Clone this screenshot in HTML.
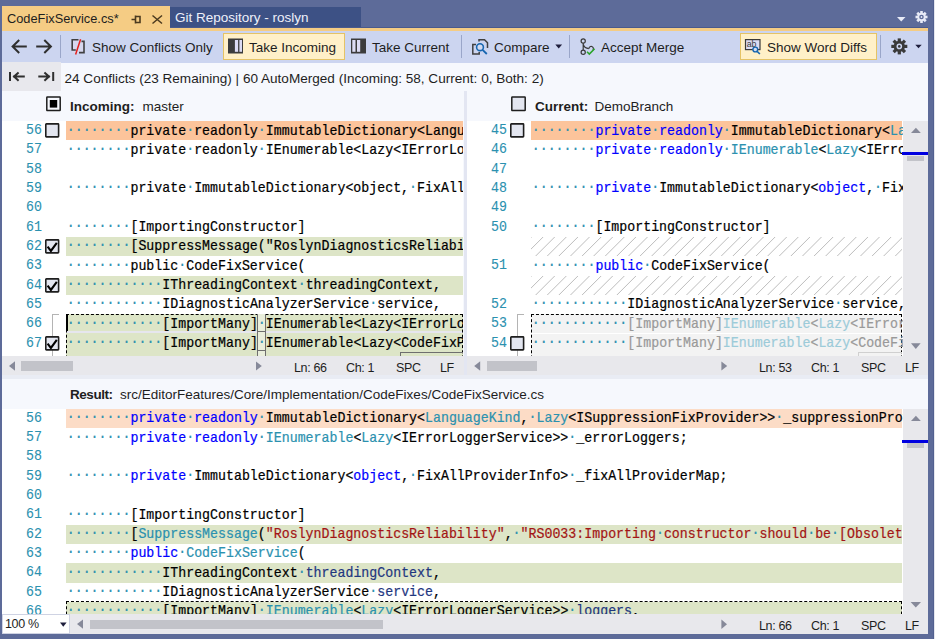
<!DOCTYPE html>
<html><head><meta charset="utf-8">
<style>
*{margin:0;padding:0;box-sizing:border-box}
html,body{width:935px;height:639px;overflow:hidden;background:#5d6b99;font-family:"Liberation Sans",sans-serif;color:#1e1e1e}
.a{position:absolute}
svg{position:absolute;overflow:visible}
.ui{font-size:13.5px;white-space:pre;position:absolute;line-height:16px;color:#1e1e1e}
.sep{position:absolute;width:1px;background:#9aa6c9;top:35px;height:23px}
.pane{position:absolute;overflow:hidden;background:#fff}
.in{position:absolute;left:0;top:0}
.bg{position:absolute;height:19.33px}
.bg.o{background:#fcc49b}
.bg.o2{background:#fcdcc6}
.bg.g{background:#dde5c7}
.bg.x{background:#f3f3f3}
.bg.h{background:repeating-linear-gradient(135deg,#fff 0,#fff 7.2px,#c4c4c4 7.2px,#c4c4c4 8.2px)}
.ln{position:absolute;width:40px;text-align:right;font-family:"Liberation Mono",monospace;font-size:13.27px;line-height:19.33px;color:#2b91af;white-space:pre;-webkit-text-stroke:0.1px currentColor;transform:scaleY(1.07);transform-origin:0 13.5px}
.code{position:absolute;font-family:"Liberation Mono",monospace;font-size:13.27px;line-height:19.33px;color:#000;white-space:pre;-webkit-text-stroke:0.2px currentColor;transform:scaleY(1.07);transform-origin:0 13.5px}
.code i{font-style:normal}
.code b{font-weight:normal;color:#2b91af;-webkit-text-stroke:0.2px currentColor;position:relative;top:-1.2px}
.code .k{color:#0000ff}.code .t{color:#2b91af}.code .s{color:#a31515}.code .p{color:#1f377f}.code .g{color:#999}.code .gt{color:#9ccbd9}
.cb{position:absolute;width:15px;height:15px;border:2px solid #1e1e1e;background:#e3e6f0;border-radius:1px}
.vs,.hs{position:absolute;background:#e8e8ec}
.thumb{position:absolute;background:#c2c3c9}
.st{position:absolute;font-size:12.5px;letter-spacing:-0.35px;white-space:pre;color:#1e1e1e;line-height:16px}
.dash{position:absolute;border:1px dashed #000}
</style></head><body>
<!-- main bg -->
<div class="a" style="left:2px;top:31px;width:926px;height:602px;background:#f6f8fd"></div>
<!-- tab bar -->
<div class="a" style="left:2px;top:6px;width:168px;height:25px;background:#f5cc84"></div>
<div class="ui" style="left:7px;top:11px;font-size:12.8px">CodeFixService.cs*</div>
<svg style="left:0;top:0" width="935" height="32">
 <path d="M131.5 19.5h4M135.5 15.5v8M135.5 16.5h4.5v6h-4.5" stroke="#4b3a1f" stroke-width="1.6" fill="none"/>
 <path d="M152.5 15.5l9.5 8M162 15.5l-9.5 8" stroke="#4b3a1f" stroke-width="1.5" fill="none"/>
 <path d="M897 17h8.5l-4.25 4.5z" fill="#e8ebf7"/>
 <g transform="translate(921.5 17)" fill="#e8ebf7"><circle r="4.2"/><g id="t"><rect x="-1.3" y="-6" width="2.6" height="12"/><rect x="-1.3" y="-6" width="2.6" height="12" transform="rotate(45)"/><rect x="-1.3" y="-6" width="2.6" height="12" transform="rotate(90)"/><rect x="-1.3" y="-6" width="2.6" height="12" transform="rotate(135)"/></g><circle r="2.3" fill="#5d6b99"/><circle r="0.9" fill="#e8ebf7"/></g>
</svg>
<div class="a" style="left:170px;top:7px;width:191px;height:21px;background:#3d5185"></div>
<div class="a" style="left:170px;top:27px;width:758px;height:1px;background:#4a5a8c"></div>
<div class="ui" style="left:175px;top:10px;color:#eef0fa;font-size:13.5px">Git Repository - roslyn</div>
<div class="a" style="left:2px;top:28px;width:926px;height:3px;background:#f5cc84"></div>
<!-- toolbar -->
<div class="a" style="left:2px;top:31px;width:926px;height:31.5px;background:#ccd5f0"></div>
<div class="a" style="left:223px;top:33px;width:122px;height:27px;background:#fff0c8;border:1px solid #e5c365"></div>
<div class="a" style="left:740px;top:33px;width:137px;height:27px;background:#fff0c8;border:1px solid #e5c365"></div>
<div class="sep" style="left:60px"></div>
<div class="sep" style="left:461px"></div>
<div class="sep" style="left:569px"></div>
<div class="sep" style="left:880px"></div>
<svg style="left:0;top:0" width="935" height="64">
 <!-- back/forward -->
 <path d="M26.8 46.5H12.5M19.2 40l-6.6 6.5 6.6 6.5" stroke="#2f2f2f" stroke-width="2" fill="none"/>
 <path d="M36.2 46.5H50.8M44.3 40l6.6 6.5-6.6 6.5" stroke="#2f2f2f" stroke-width="2" fill="none"/>
 <!-- show conflicts only -->
 <rect x="72" y="40" width="12" height="13" fill="#d6d7ee"/>
 <path d="M78.5 39.8H72.2V50H75.8M79 52.6H84V41.4H81.5" stroke="#404040" stroke-width="1.6" fill="none"/>
 <path d="M80.6 39.2L75.6 54.4" stroke="#e5201c" stroke-width="1.5"/>
 <!-- take incoming -->
 <rect x="228" y="38.5" width="15" height="15" fill="#3c3c3c"/>
 <rect x="234.9" y="40" width="3.2" height="11.8" fill="#dcdcf4"/>
 <rect x="239.4" y="40" width="2.6" height="11.8" fill="#dcdcf4"/>
 <!-- take current -->
 <rect x="351" y="38.5" width="15" height="15" fill="#3c3c3c"/>
 <rect x="352.3" y="40" width="3.2" height="11.8" fill="#dcdcf4"/>
 <rect x="357" y="40" width="3.2" height="11.8" fill="#dcdcf4"/>
 <!-- compare -->
 <path d="M479 41.5V39.8h5.5l3 3v5.2" stroke="#404040" stroke-width="1.5" fill="none"/>
 <path d="M476 44.5h-3.2v9.6h6.4v-2" stroke="#404040" stroke-width="1.5" fill="none"/>
 <circle cx="480" cy="47.2" r="3.4" stroke="#1766b0" stroke-width="1.6" fill="#d4dbf0"/>
 <path d="M482.6 49.8L486.8 54" stroke="#1766b0" stroke-width="1.8"/>
 <path d="M555.3 44.6h6.8l-3.4 3.8z" fill="#1e1e3c"/>
 <!-- accept merge -->
 <circle cx="583.2" cy="41" r="2.1" stroke="#3a3a3a" stroke-width="1.2" fill="none"/>
 <circle cx="583.2" cy="52.2" r="2.1" stroke="#3a3a3a" stroke-width="1.2" fill="none"/>
 <path d="M583.2 43.1v7M583.4 44.8c0.8 2.4 2.6 3.6 5.4 3.8" stroke="#3a3a3a" stroke-width="1.2" fill="none"/>
 <path d="M589 48.8a2.2 2.2 0 1 1 3.9 1.2" stroke="#3a3a3a" stroke-width="1.2" fill="none"/>
 <path d="M587 51.8l2.3 2.3 5.3-5.4" stroke="#2aa52a" stroke-width="1.6" fill="none"/>
 <!-- word diffs -->
 <rect x="745.5" y="39.6" width="14.5" height="10" stroke="#3a3a3a" stroke-width="1.2" fill="#dcdcf4"/>
 <text x="746.8" y="47.4" font-family="Liberation Sans" font-size="8.8" fill="#3a3a3a" letter-spacing="-0.3">ab</text>
 <circle cx="755.3" cy="49.5" r="2.4" stroke="#1766b0" stroke-width="1.4" fill="#d4dbf0"/>
 <path d="M757.1 51.3L759.9 54" stroke="#1766b0" stroke-width="1.6"/>
 <!-- gear -->
 <g transform="translate(899.3 46.4)" fill="#3a3a3a"><circle r="5.6"/><rect x="-1.6" y="-8" width="3.2" height="16"/><rect x="-1.6" y="-8" width="3.2" height="16" transform="rotate(45)"/><rect x="-1.6" y="-8" width="3.2" height="16" transform="rotate(90)"/><rect x="-1.6" y="-8" width="3.2" height="16" transform="rotate(135)"/><circle r="2.8" fill="#ccd5f0"/><circle r="1.3" fill="#3a3a3a"/></g>
 <path d="M915.3 44.8h6.4l-3.2 3.4z" fill="#1e1e3c"/>
</svg>
<div class="ui" style="left:92px;top:40px">Show Conflicts Only</div>
<div class="ui" style="left:249px;top:40px">Take Incoming</div>
<div class="ui" style="left:372px;top:40px">Take Current</div>
<div class="ui" style="left:494px;top:40px">Compare</div>
<div class="ui" style="left:601px;top:40px">Accept Merge</div>
<div class="ui" style="left:767px;top:40px">Show Word Diffs</div>
<!-- info row -->
<div class="a" style="left:2px;top:62px;width:59px;height:29px;background:#e8e8ed"></div>
<svg style="left:0;top:0" width="935" height="120">
 <path d="M10 72v9M24.8 76.6H13M18.6 72.4l-4.6 4.2 4.6 4.2" stroke="#2f2f2f" stroke-width="2" fill="none"/>
 <path d="M53.2 72v9M38.3 76.6H50M44.4 72.4l4.6 4.2-4.6 4.2" stroke="#2f2f2f" stroke-width="2" fill="none"/>
</svg>
<div class="ui" style="left:64.5px;top:70.5px;font-size:13.57px">24 Conflicts (23 Remaining) | 60 AutoMerged (Incoming: 58, Current: 0, Both: 2)</div>
<svg style="left:45.5px;top:96px" width="16" height="16"><rect x="0.8" y="0.9" width="13.4" height="13.6" rx="0.5" fill="#f6f8fd" stroke="#1e1e1e" stroke-width="1.5"/><rect x="3.8" y="4" width="7.4" height="7.6" fill="#000"/></svg>
<div class="ui" style="left:70px;top:99px"><b>Incoming:</b></div><div class="ui" style="left:142.5px;top:99px">master</div>
<svg style="left:510.5px;top:96px" width="16" height="16"><rect x="0.8" y="0.9" width="13.4" height="13.6" rx="0.5" fill="#e3e6f0" stroke="#1e1e1e" stroke-width="1.5"/></svg>
<div class="ui" style="left:535px;top:99px"><b>Current:</b></div><div class="ui" style="left:594.5px;top:99px">DemoBranch</div>
<div class="a" style="left:464px;top:91px;width:3px;height:284px;background:#e3e6f2"></div>
<!-- left pane -->
<div class="pane" style="left:2px;top:121px;width:461px;height:235px">
<div class="in" style="left:-2px;top:0">
<div class="bg o" style="top:0.00px;left:66px;width:397px"></div>
<div class="bg g" style="top:115.98px;left:66px;width:397px"></div>
<div class="bg g" style="top:154.64px;left:66px;width:397px"></div>
<div class="bg g" style="top:193.30px;left:66px;width:397px"></div>
<div class="bg g" style="top:212.63px;left:66px;width:397px"></div>
<div class="bg g" style="top:231.96px;left:66px;width:397px"></div>

<div class="a" style="left:66px;top:210.13px;width:397px;height:2px;background:#e6e6ee"></div>
<div class="a" style="left:51.5px;top:192.80px;width:1px;height:60px;background:#b4b4b4"></div>
<div class="a" style="left:51.5px;top:192.80px;width:7px;height:1px;background:#b4b4b4"></div>
<div class="dash" style="left:66px;top:192.70px;width:397px;height:60px;border-right:1px dashed #000"></div>
<div class="a" style="left:257px;top:193.30px;width:9px;height:60px;background:#e9eedb;border:1px solid #6e6e6e;border-top:0"></div>
<div class="a" style="left:257px;top:210.13px;width:9px;height:1px;background:#6e6e6e"></div>
<div class="a" style="left:257px;top:229.46px;width:9px;height:1px;background:#6e6e6e"></div>
<div class="a" style="left:400px;top:231.46px;width:63px;height:10px;border:1px solid #6e6e6e;border-right:0"></div>
<div class="a" style="left:65.5px;top:193.30px;width:2.3px;height:17px;background:#000"></div>

<div class="ln" style="top:0.00px;left:2px">56</div>
<div class="code" style="top:0.50px;left:66.70px"><b>·</b><b>·</b><b>·</b><b>·</b><b>·</b><b>·</b><b>·</b><b>·</b>private<b>·</b>readonly<b>·</b>ImmutableDictionary&lt;LanguageKind,<b>·</b>Lazy&lt;ISuppressionFixProvider&gt;&gt;</div>
<svg style="left:45.00px;top:2.00px" width="16" height="16"><rect x="0.8" y="0.9" width="12.8" height="13" rx="0.6" fill="#e3e6f0" stroke="#1e1e1e" stroke-width="1.6"/></svg>
<div class="ln" style="top:19.33px;left:2px">57</div>
<div class="code" style="top:19.83px;left:66.70px"><b>·</b><b>·</b><b>·</b><b>·</b><b>·</b><b>·</b><b>·</b><b>·</b>private<b>·</b>readonly<b>·</b>IEnumerable&lt;Lazy&lt;IErrorLoggerService&gt;&gt;<b>·</b>_errorLoggers;</div>
<div class="ln" style="top:38.66px;left:2px">58</div>
<div class="code" style="top:39.16px;left:66.70px"></div>
<div class="ln" style="top:57.99px;left:2px">59</div>
<div class="code" style="top:58.49px;left:66.70px"><b>·</b><b>·</b><b>·</b><b>·</b><b>·</b><b>·</b><b>·</b><b>·</b>private<b>·</b>ImmutableDictionary&lt;object,<b>·</b>FixAllProviderInfo&gt;<b>·</b>_fixAllProviderMap;</div>
<div class="ln" style="top:77.32px;left:2px">60</div>
<div class="code" style="top:77.82px;left:66.70px"></div>
<div class="ln" style="top:96.65px;left:2px">61</div>
<div class="code" style="top:97.15px;left:66.70px"><b>·</b><b>·</b><b>·</b><b>·</b><b>·</b><b>·</b><b>·</b><b>·</b>[ImportingConstructor]</div>
<div class="ln" style="top:115.98px;left:2px">62</div>
<div class="code" style="top:116.48px;left:66.70px"><b>·</b><b>·</b><b>·</b><b>·</b><b>·</b><b>·</b><b>·</b><b>·</b>[SuppressMessage(&quot;RoslynDiagnosticsReliability&quot;,<b>·</b>&quot;RS0033&quot;)]</div>
<svg style="left:45.00px;top:117.98px" width="16" height="16"><rect x="0.8" y="0.9" width="12.8" height="13" rx="0.6" fill="#e3e6f0" stroke="#1e1e1e" stroke-width="1.6"/><path d="M2.6 7.6l3.3 4.3 5.9-8" stroke="#000" stroke-width="2.1" fill="none"/></svg>
<div class="ln" style="top:135.31px;left:2px">63</div>
<div class="code" style="top:135.81px;left:66.70px"><b>·</b><b>·</b><b>·</b><b>·</b><b>·</b><b>·</b><b>·</b><b>·</b>public<b>·</b>CodeFixService(</div>
<div class="ln" style="top:154.64px;left:2px">64</div>
<div class="code" style="top:155.14px;left:66.70px"><b>·</b><b>·</b><b>·</b><b>·</b><b>·</b><b>·</b><b>·</b><b>·</b><b>·</b><b>·</b><b>·</b><b>·</b>IThreadingContext<b>·</b>threadingContext,</div>
<svg style="left:45.00px;top:156.64px" width="16" height="16"><rect x="0.8" y="0.9" width="12.8" height="13" rx="0.6" fill="#e3e6f0" stroke="#1e1e1e" stroke-width="1.6"/><path d="M2.6 7.6l3.3 4.3 5.9-8" stroke="#000" stroke-width="2.1" fill="none"/></svg>
<div class="ln" style="top:173.97px;left:2px">65</div>
<div class="code" style="top:174.47px;left:66.70px"><b>·</b><b>·</b><b>·</b><b>·</b><b>·</b><b>·</b><b>·</b><b>·</b><b>·</b><b>·</b><b>·</b><b>·</b>IDiagnosticAnalyzerService<b>·</b>service,</div>
<div class="ln" style="top:193.30px;left:2px">66</div>
<div class="code" style="top:193.80px;left:66.70px"><b>·</b><b>·</b><b>·</b><b>·</b><b>·</b><b>·</b><b>·</b><b>·</b><b>·</b><b>·</b><b>·</b><b>·</b>[ImportMany]<b>·</b>IEnumerable&lt;Lazy&lt;IErrorLoggerService&gt;&gt;<b>·</b>loggers,</div>
<div class="ln" style="top:212.63px;left:2px">67</div>
<div class="code" style="top:213.13px;left:66.70px"><b>·</b><b>·</b><b>·</b><b>·</b><b>·</b><b>·</b><b>·</b><b>·</b><b>·</b><b>·</b><b>·</b><b>·</b>[ImportMany]<b>·</b>IEnumerable&lt;Lazy&lt;CodeFixProvider&gt;&gt;<b>·</b>fixers,</div>
<svg style="left:45.00px;top:214.63px" width="16" height="16"><rect x="0.8" y="0.9" width="12.8" height="13" rx="0.6" fill="#e3e6f0" stroke="#1e1e1e" stroke-width="1.6"/><path d="M2.6 7.6l3.3 4.3 5.9-8" stroke="#000" stroke-width="2.1" fill="none"/></svg>
</div></div>
<!-- right pane -->
<div class="pane" style="left:467px;top:121px;width:436px;height:235px">
<div class="in" style="left:-467px;top:0">
<div class="bg o" style="top:0.00px;left:531px;width:371px"></div>
<svg style="left:531px;top:115.98px;overflow:hidden" width="371" height="19.33"><path d="M-30.60 19.5L-10.90 -0.2M-19.00 19.5L0.70 -0.2M-7.40 19.5L12.30 -0.2M4.20 19.5L23.90 -0.2M15.80 19.5L35.50 -0.2M27.40 19.5L47.10 -0.2M39.00 19.5L58.70 -0.2M50.60 19.5L70.30 -0.2M62.20 19.5L81.90 -0.2M73.80 19.5L93.50 -0.2M85.40 19.5L105.10 -0.2M97.00 19.5L116.70 -0.2M108.60 19.5L128.30 -0.2M120.20 19.5L139.90 -0.2M131.80 19.5L151.50 -0.2M143.40 19.5L163.10 -0.2M155.00 19.5L174.70 -0.2M166.60 19.5L186.30 -0.2M178.20 19.5L197.90 -0.2M189.80 19.5L209.50 -0.2M201.40 19.5L221.10 -0.2M213.00 19.5L232.70 -0.2M224.60 19.5L244.30 -0.2M236.20 19.5L255.90 -0.2M247.80 19.5L267.50 -0.2M259.40 19.5L279.10 -0.2M271.00 19.5L290.70 -0.2M282.60 19.5L302.30 -0.2M294.20 19.5L313.90 -0.2M305.80 19.5L325.50 -0.2M317.40 19.5L337.10 -0.2M329.00 19.5L348.70 -0.2M340.60 19.5L360.30 -0.2M352.20 19.5L371.90 -0.2M363.80 19.5L383.50 -0.2M375.40 19.5L395.10 -0.2M387.00 19.5L406.70 -0.2" stroke="#bdbdbd" stroke-width="1" fill="none"/></svg>
<svg style="left:531px;top:154.64px;overflow:hidden" width="371" height="19.33"><path d="M-30.60 19.5L-10.90 -0.2M-19.00 19.5L0.70 -0.2M-7.40 19.5L12.30 -0.2M4.20 19.5L23.90 -0.2M15.80 19.5L35.50 -0.2M27.40 19.5L47.10 -0.2M39.00 19.5L58.70 -0.2M50.60 19.5L70.30 -0.2M62.20 19.5L81.90 -0.2M73.80 19.5L93.50 -0.2M85.40 19.5L105.10 -0.2M97.00 19.5L116.70 -0.2M108.60 19.5L128.30 -0.2M120.20 19.5L139.90 -0.2M131.80 19.5L151.50 -0.2M143.40 19.5L163.10 -0.2M155.00 19.5L174.70 -0.2M166.60 19.5L186.30 -0.2M178.20 19.5L197.90 -0.2M189.80 19.5L209.50 -0.2M201.40 19.5L221.10 -0.2M213.00 19.5L232.70 -0.2M224.60 19.5L244.30 -0.2M236.20 19.5L255.90 -0.2M247.80 19.5L267.50 -0.2M259.40 19.5L279.10 -0.2M271.00 19.5L290.70 -0.2M282.60 19.5L302.30 -0.2M294.20 19.5L313.90 -0.2M305.80 19.5L325.50 -0.2M317.40 19.5L337.10 -0.2M329.00 19.5L348.70 -0.2M340.60 19.5L360.30 -0.2M352.20 19.5L371.90 -0.2M363.80 19.5L383.50 -0.2M375.40 19.5L395.10 -0.2M387.00 19.5L406.70 -0.2" stroke="#bdbdbd" stroke-width="1" fill="none"/></svg>
<div class="bg x" style="top:193.30px;left:531px;width:371px"></div>
<div class="bg x" style="top:212.63px;left:531px;width:371px"></div>
<div class="bg x" style="top:231.96px;left:531px;width:371px"></div>

<div class="a" style="left:531px;top:211.63px;width:371px;height:1px;background:#fff"></div>
<div class="a" style="left:516.5px;top:192.80px;width:1px;height:60px;background:#b4b4b4"></div>
<div class="a" style="left:516.5px;top:192.80px;width:7px;height:1px;background:#b4b4b4"></div>
<div class="dash" style="left:531px;top:192.70px;width:371px;height:60px;border-right:1px dashed #000"></div>
<div class="a" style="left:858px;top:230.96px;width:44px;height:10px;border:1px solid #d0d0d0;border-right:0"></div>

<div class="ln" style="top:0.00px;left:467px">45</div>
<div class="code" style="top:0.50px;left:531.70px"><b>·</b><b>·</b><b>·</b><b>·</b><b>·</b><b>·</b><b>·</b><b>·</b><i class="k">private</i><b>·</b><i class="k">readonly</i><b>·</b>ImmutableDictionary&lt;<i class="t">LanguageKind</i>,<b>·</b></div>
<svg style="left:510.00px;top:2.00px" width="16" height="16"><rect x="0.8" y="0.9" width="12.8" height="13" rx="0.6" fill="#e3e6f0" stroke="#1e1e1e" stroke-width="1.6"/></svg>
<div class="ln" style="top:19.33px;left:467px">46</div>
<div class="code" style="top:19.83px;left:531.70px"><b>·</b><b>·</b><b>·</b><b>·</b><b>·</b><b>·</b><b>·</b><b>·</b><i class="k">private</i><b>·</b><i class="k">readonly</i><b>·</b><i class="t">IEnumerable</i>&lt;<i class="t">Lazy</i>&lt;IErrorLoggerService&gt;&gt;</div>
<div class="ln" style="top:38.66px;left:467px">47</div>
<div class="code" style="top:39.16px;left:531.70px"></div>
<div class="ln" style="top:57.99px;left:467px">48</div>
<div class="code" style="top:58.49px;left:531.70px"><b>·</b><b>·</b><b>·</b><b>·</b><b>·</b><b>·</b><b>·</b><b>·</b><i class="k">private</i><b>·</b>ImmutableDictionary&lt;<i class="k">object</i>,<b>·</b>FixAllProviderInfo&gt;</div>
<div class="ln" style="top:77.32px;left:467px">49</div>
<div class="code" style="top:77.82px;left:531.70px"></div>
<div class="ln" style="top:96.65px;left:467px">50</div>
<div class="code" style="top:97.15px;left:531.70px"><b>·</b><b>·</b><b>·</b><b>·</b><b>·</b><b>·</b><b>·</b><b>·</b>[ImportingConstructor]</div>
<div class="ln" style="top:135.31px;left:467px">51</div>
<div class="code" style="top:135.81px;left:531.70px"><b>·</b><b>·</b><b>·</b><b>·</b><b>·</b><b>·</b><b>·</b><b>·</b><i class="k">public</i><b>·</b>CodeFixService(</div>
<div class="ln" style="top:173.97px;left:467px">52</div>
<div class="code" style="top:174.47px;left:531.70px"><b>·</b><b>·</b><b>·</b><b>·</b><b>·</b><b>·</b><b>·</b><b>·</b><b>·</b><b>·</b><b>·</b><b>·</b>IDiagnosticAnalyzerService<b>·</b>service,</div>
<div class="ln" style="top:193.30px;left:467px">53</div>
<div class="code" style="top:193.80px;left:531.70px"><b>·</b><b>·</b><b>·</b><b>·</b><b>·</b><b>·</b><b>·</b><b>·</b><b>·</b><b>·</b><b>·</b><b>·</b><i class="g">[ImportMany]</i><i class="gt">IEnumerable</i><i class="g">&lt;</i><i class="gt">Lazy</i><i class="g">&lt;IErrorLoggerService&gt;&gt;</i></div>
<div class="ln" style="top:212.63px;left:467px">54</div>
<div class="code" style="top:213.13px;left:531.70px"><b>·</b><b>·</b><b>·</b><b>·</b><b>·</b><b>·</b><b>·</b><b>·</b><b>·</b><b>·</b><b>·</b><b>·</b><i class="g">[ImportMany]</i><i class="gt">IEnumerable</i><i class="g">&lt;</i><i class="gt">Lazy</i><i class="g">&lt;CodeFixProvider&gt;&gt;</i></div>
<svg style="left:510.00px;top:214.63px" width="16" height="16"><rect x="0.8" y="0.9" width="12.8" height="13" rx="0.6" fill="#e3e6f0" stroke="#1e1e1e" stroke-width="1.6"/></svg>
</div></div>
<div class="vs" style="left:903px;top:121px;width:25px;height:235px"></div>
<svg style="left:0;top:0" width="935" height="380">
 <path d="M911 133h9.8l-4.9-5.2z" fill="#868999"/>
 <path d="M911 343.2h9.6l-4.8 5.8z" fill="#868999"/>
</svg>
<div class="thumb" style="left:907px;top:155.5px;width:17px;height:5px"></div>
<div class="a" style="left:902px;top:152px;width:26px;height:3px;background:#0000e0"></div>
<!-- hscroll/status top -->
<div class="hs" style="left:2px;top:356px;width:462px;height:19px"></div>
<div class="hs" style="left:467px;top:356px;width:461px;height:19px"></div>
<div class="a" style="left:2px;top:375px;width:926px;height:4px;background:#e9ecf4"></div>
<svg style="left:0;top:0" width="935" height="380">
 <path d="M15 361.2v9.6l-6-4.8z" fill="#868999"/>
 <path d="M256 361.5v9l5.8-4.5z" fill="#868999"/>
 <path d="M480.2 361.3v9.4l-6-4.7z" fill="#868999"/>
 <path d="M721.4 361.5v9l5.8-4.5z" fill="#868999"/>
</svg>
<div class="thumb" style="left:21px;top:361px;width:52px;height:10px"></div>
<div class="thumb" style="left:486.5px;top:361px;width:50.5px;height:10px"></div>
<div class="st" style="left:294px;top:359.6px">Ln: 66</div>
<div class="st" style="left:346px;top:359.6px">Ch: 1</div>
<div class="st" style="left:396px;top:359.6px">SPC</div>
<div class="st" style="left:440px;top:359.6px">LF</div>
<div class="st" style="left:759px;top:359.6px">Ln: 53</div>
<div class="st" style="left:811px;top:359.6px">Ch: 1</div>
<div class="st" style="left:861px;top:359.6px">SPC</div>
<div class="st" style="left:905px;top:359.6px">LF</div>
<!-- result header -->
<div class="a" style="left:2px;top:379px;width:926px;height:30px;background:#f6f8fd"></div>
<div class="ui" style="left:70px;top:387px;letter-spacing:-0.45px"><b>Result:</b></div><div class="ui" style="left:120px;top:387px">src/EditorFeatures/Core/Implementation/CodeFixes/CodeFixService.cs</div>
<!-- result pane -->
<div class="pane" style="left:2px;top:408.7px;width:901px;height:205.3px">
<div class="in" style="left:-2px;top:0">
<div class="bg o2" style="top:0.00px;left:66px;width:836px"></div>
<div class="bg g" style="top:115.98px;left:66px;width:836px"></div>
<div class="bg g" style="top:154.64px;left:66px;width:836px"></div>
<div class="bg g" style="top:193.30px;left:66px;width:836px"></div>

<div class="dash" style="left:66px;top:192.70px;width:836px;height:40px"></div>

<div class="ln" style="top:0.00px;left:2px">56</div>
<div class="code" style="top:0.50px;left:66.70px"><b>·</b><b>·</b><b>·</b><b>·</b><b>·</b><b>·</b><b>·</b><b>·</b><i class="k">private</i><b>·</b><i class="k">readonly</i><b>·</b>ImmutableDictionary&lt;<i class="t">LanguageKind</i>,<b>·</b><i class="t">Lazy</i>&lt;ISuppressionFixProvider&gt;&gt;<b>·</b>_suppressionProviders;</div>
<div class="ln" style="top:19.33px;left:2px">57</div>
<div class="code" style="top:19.83px;left:66.70px"><b>·</b><b>·</b><b>·</b><b>·</b><b>·</b><b>·</b><b>·</b><b>·</b><i class="k">private</i><b>·</b><i class="k">readonly</i><b>·</b><i class="t">IEnumerable</i>&lt;<i class="t">Lazy</i>&lt;IErrorLoggerService&gt;&gt;<b>·</b>_errorLoggers;</div>
<div class="ln" style="top:38.66px;left:2px">58</div>
<div class="code" style="top:39.16px;left:66.70px"></div>
<div class="ln" style="top:57.99px;left:2px">59</div>
<div class="code" style="top:58.49px;left:66.70px"><b>·</b><b>·</b><b>·</b><b>·</b><b>·</b><b>·</b><b>·</b><b>·</b><i class="k">private</i><b>·</b>ImmutableDictionary&lt;<i class="k">object</i>,<b>·</b>FixAllProviderInfo&gt;<b>·</b>_fixAllProviderMap;</div>
<div class="ln" style="top:77.32px;left:2px">60</div>
<div class="code" style="top:77.82px;left:66.70px"></div>
<div class="ln" style="top:96.65px;left:2px">61</div>
<div class="code" style="top:97.15px;left:66.70px"><b>·</b><b>·</b><b>·</b><b>·</b><b>·</b><b>·</b><b>·</b><b>·</b>[ImportingConstructor]</div>
<div class="ln" style="top:115.98px;left:2px">62</div>
<div class="code" style="top:116.48px;left:66.70px"><b>·</b><b>·</b><b>·</b><b>·</b><b>·</b><b>·</b><b>·</b><b>·</b>[<i class="t">SuppressMessage</i>(<i class="s">&quot;RoslynDiagnosticsReliability&quot;</i>,<b>·</b><i class="s">&quot;RS0033:Importing</i><b>·</b><i class="s">constructor</i><b>·</b><i class="s">should</i><b>·</b><i class="s">be</i><b>·</b><i class="s">[Obsolete]&quot;</i></div>
<div class="ln" style="top:135.31px;left:2px">63</div>
<div class="code" style="top:135.81px;left:66.70px"><b>·</b><b>·</b><b>·</b><b>·</b><b>·</b><b>·</b><b>·</b><b>·</b><i class="k">public</i><b>·</b><i class="t">CodeFixService</i>(</div>
<div class="ln" style="top:154.64px;left:2px">64</div>
<div class="code" style="top:155.14px;left:66.70px"><b>·</b><b>·</b><b>·</b><b>·</b><b>·</b><b>·</b><b>·</b><b>·</b><b>·</b><b>·</b><b>·</b><b>·</b>IThreadingContext<b>·</b><i class="p">threadingContext</i>,</div>
<div class="ln" style="top:173.97px;left:2px">65</div>
<div class="code" style="top:174.47px;left:66.70px"><b>·</b><b>·</b><b>·</b><b>·</b><b>·</b><b>·</b><b>·</b><b>·</b><b>·</b><b>·</b><b>·</b><b>·</b>IDiagnosticAnalyzerService<b>·</b><i class="p">service</i>,</div>
<div class="ln" style="top:193.30px;left:2px">66</div>
<div class="code" style="top:193.80px;left:66.70px"><b>·</b><b>·</b><b>·</b><b>·</b><b>·</b><b>·</b><b>·</b><b>·</b><b>·</b><b>·</b><b>·</b><b>·</b>[ImportMany]<b>·</b><i class="t">IEnumerable</i>&lt;<i class="t">Lazy</i>&lt;IErrorLoggerService&gt;&gt;<b>·</b><i class="p">loggers</i>,</div>
</div></div>
<div class="vs" style="left:903px;top:409px;width:25px;height:205px"></div>
<div class="thumb" style="left:907px;top:443px;width:17px;height:5px"></div>
<div class="a" style="left:902px;top:440px;width:26px;height:3px;background:#0000e0"></div>
<svg style="left:0;top:0" width="935" height="639">
 <path d="M911 421h9.8l-4.9-5.2z" fill="#868999"/>
 <path d="M910.6 602h10.4l-5.2 5.6z" fill="#868999"/>
</svg>
<!-- bottom scroll -->
<div class="hs" style="left:2px;top:614px;width:926px;height:20px"></div>
<div class="a" style="left:2px;top:614px;width:68px;height:20px;background:#fff;border:1px solid #cfd3e3"></div>
<div class="st" style="left:5px;top:616.2px">100 %</div>
<svg style="left:0;top:0" width="935" height="639">
 <path d="M60 622.5h6.6l-3.3 4.3z" fill="#1e1e3c"/>
 <path d="M83 619.5v9.2l-6-4.6z" fill="#868999"/>
 <path d="M721.4 619.6v9.4l5.6-4.7z" fill="#868999"/>
</svg>
<div class="thumb" style="left:90px;top:619.5px;width:293px;height:9.5px"></div>
<div class="st" style="left:759px;top:618.3px">Ln: 66</div>
<div class="st" style="left:811px;top:618.3px">Ch: 1</div>
<div class="st" style="left:861px;top:618.3px">SPC</div>
<div class="st" style="left:905px;top:618.3px">LF</div>
<div class="a" style="left:933px;top:0;width:1px;height:639px;background:#52608f"></div>
<div class="a" style="left:934px;top:0;width:1px;height:639px;background:#e4e6ee"></div>
</body></html>
